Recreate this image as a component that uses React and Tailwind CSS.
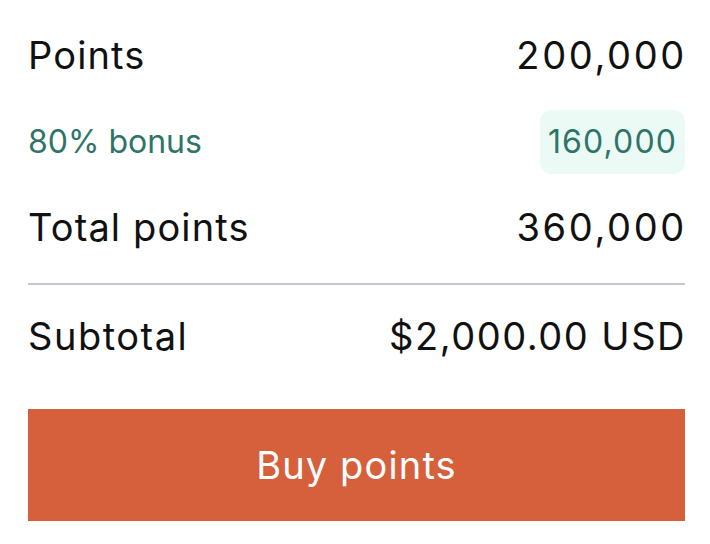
import React from "react";

const rows = [
  { label: "Points", value: "200,000" },
  { label: "80% bonus", value: "160,000", bonus: true },
  { label: "Total points", value: "360,000" },
];

export default function App() {
  return (
    <div className="min-h-screen bg-white pl-[28px] pr-[25px] pt-[27px] text-[#111] font-['Inter',sans-serif]">
      <div className="flex flex-col">
        {rows.map((row) =>
          row.bonus ? (
            <div key={row.label} className="flex h-[64px] mt-[27px] items-center justify-between text-[32px] text-[#2f7468]">
              <span>{row.label}</span>
              <span className="h-full flex items-center rounded-[12px] bg-[#ecfaf5] px-[8px] tracking-[0.035em]">{row.value}</span>
            </div>
          ) : (
            <div key={row.label} className={`flex h-[56px] items-center justify-between text-[38px] ${row.label === "Points" ? "" : "mt-[25px]"}`}>
              <span className="tracking-[0.03em]">{row.label}</span>
              <span className="tracking-[0.07em] -mr-[2px]">{row.value}</span>
            </div>
          )
        )}
        <div className="mt-[28px] border-t-2 border-[#c5c9cd]" />
        <div className="flex h-[56px] mt-[23px] items-center justify-between text-[38px]">
          <span className="tracking-[0.04em]">Subtotal</span>
          <span className="tracking-[0.04em] -mr-[1px]">$2,000.00 USD</span>
        </div>
        <button className="mt-[45px] h-[112px] w-full bg-[#d6603b] text-white text-[38px] tracking-[0.03em] flex items-center justify-center">
          Buy points
        </button>
      </div>
    </div>
  );
}
